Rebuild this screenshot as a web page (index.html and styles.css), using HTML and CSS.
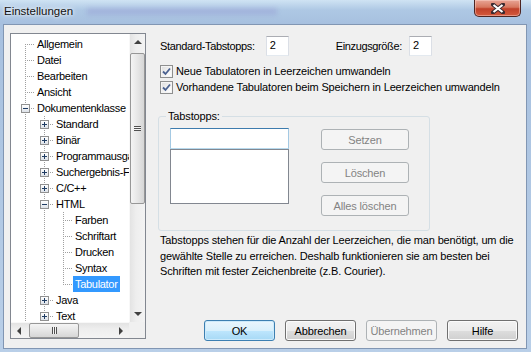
FILE: index.html
```html
<!doctype html>
<html>
<head>
<meta charset="utf-8">
<title>Einstellungen</title>
<link rel="stylesheet" href="styles.css">
</head>
<body>
<div class="window">
  <div class="titlebar">
    <span class="title">Einstellungen</span>
    <span class="ghost"></span>
    <span class="close">
      <svg width="14" height="11" viewBox="0 0 14 11">
        <path d="M2 1.5 L12 9.5 M12 1.5 L2 9.5" stroke="#3a2a30" stroke-width="4" stroke-linecap="square"/>
        <path d="M2.5 2 L11.5 9 M11.5 2 L2.5 9" stroke="#fff" stroke-width="2.2"/>
      </svg>
    </span>
  </div>

  <div class="client">
    <div class="tree">
      <div class="items">
        <div class="row"><span class="c first"></span><span class="label">Allgemein</span></div>
        <div class="row"><span class="c tee"></span><span class="label">Datei</span></div>
        <div class="row"><span class="c tee"></span><span class="label">Bearbeiten</span></div>
        <div class="row"><span class="c tee"></span><span class="label">Ansicht</span></div>
        <div class="row"><span class="c tee"><span class="box"></span></span><span class="label">Dokumentenklasse</span></div>
        <div class="row"><span class="c pipe"></span><span class="c tee"><span class="box plus"></span></span><span class="label">Standard</span></div>
        <div class="row"><span class="c pipe"></span><span class="c tee"><span class="box plus"></span></span><span class="label">Binär</span></div>
        <div class="row"><span class="c pipe"></span><span class="c tee"><span class="box plus"></span></span><span class="label">Programmausgabe</span></div>
        <div class="row"><span class="c pipe"></span><span class="c tee"><span class="box plus"></span></span><span class="label">Suchergebnis-Fenster</span></div>
        <div class="row"><span class="c pipe"></span><span class="c tee"><span class="box plus"></span></span><span class="label">C/C++</span></div>
        <div class="row"><span class="c pipe"></span><span class="c tee"><span class="box"></span></span><span class="label">HTML</span></div>
        <div class="row"><span class="c pipe"></span><span class="c pipe"></span><span class="c tee"></span><span class="label">Farben</span></div>
        <div class="row"><span class="c pipe"></span><span class="c pipe"></span><span class="c tee"></span><span class="label">Schriftart</span></div>
        <div class="row"><span class="c pipe"></span><span class="c pipe"></span><span class="c tee"></span><span class="label">Drucken</span></div>
        <div class="row"><span class="c pipe"></span><span class="c pipe"></span><span class="c tee"></span><span class="label">Syntax</span></div>
        <div class="row"><span class="c pipe"></span><span class="c pipe"></span><span class="c last"></span><span class="label sel">Tabulator</span></div>
        <div class="row"><span class="c pipe"></span><span class="c tee"><span class="box plus"></span></span><span class="label">Java</span></div>
        <div class="row"><span class="c pipe"></span><span class="c tee"><span class="box plus"></span></span><span class="label">Text</span></div>
        <div class="row"><span class="c pipe"></span><span class="c pipe"></span></div>
      </div>
      <div class="vscroll">
        <span class="arrow up"></span>
        <span class="vthumb"><span class="grip-h"></span></span>
        <span class="arrow down"></span>
      </div>
      <div class="hscroll">
        <span class="arrow left"></span>
        <span class="hthumb"><span class="grip-v"></span></span>
        <span class="arrow right"></span>
      </div>
      <div class="corner"></div>
    </div>

    <div class="panel">
      <div class="fields">
        <label class="lbl">Standard-Tabstopps:</label>
        <span class="num">2</span>
        <label class="lbl indent-lbl">Einzugsgröße:</label>
        <span class="num">2</span>
      </div>

      <div class="checks">
        <div class="check-row">
          <span class="cb"><svg width="9" height="9" viewBox="0 0 9 9"><path d="M1 4.5 L3.5 7 L8 1.5" fill="none" stroke="#4b6291" stroke-width="1.8"/></svg></span>
          <span>Neue Tabulatoren in Leerzeichen umwandeln</span>
        </div>
        <div class="check-row">
          <span class="cb"><svg width="9" height="9" viewBox="0 0 9 9"><path d="M1 4.5 L3.5 7 L8 1.5" fill="none" stroke="#4b6291" stroke-width="1.8"/></svg></span>
          <span>Vorhandene Tabulatoren beim Speichern in Leerzeichen umwandeln</span>
        </div>
      </div>

      <fieldset class="group">
        <legend>Tabstopps:</legend>
        <div class="group-body">
          <div class="lists">
            <span class="edit"></span>
            <span class="listbox"></span>
          </div>
          <div class="side-buttons">
            <span class="btn disabled">Setzen</span>
            <span class="btn disabled">Löschen</span>
            <span class="btn disabled">Alles löschen</span>
          </div>
        </div>
      </fieldset>

      <p class="hint">Tabstopps stehen für die Anzahl der Leerzeichen, die man benötigt, um die<br>gewählte Stelle zu erreichen. Deshalb funktionieren sie am besten bei<br>Schriften mit fester Zeichenbreite (z.B. Courier).</p>

      <div class="buttons">
        <span class="btn default">OK</span>
        <span class="btn">Abbrechen</span>
        <span class="btn disabled">Übernehmen</span>
        <span class="btn">Hilfe</span>
      </div>
    </div>
  </div>
</div>
</body>
</html>
```

FILE: styles.css
```css
* { box-sizing: border-box; }
body { margin: 0; font-family: "Liberation Sans", Arial, sans-serif; font-size: 11px; color: #000; }

.window {
  width: 531px;
  height: 352px;
  display: flex;
  flex-direction: column;
  overflow: hidden;
  background: linear-gradient(#cfe3f3 0, #aec8e4 10px, #a7c0df 24px, #b9cfe8 100%);
}

/* title bar */
.titlebar { height: 24px; flex: none; display: flex; align-items: flex-start; padding-left: 4px; }
.title { font-size: 11.5px; line-height: 14px; margin-top: 4px; color: #111; text-shadow: 0 0 6px #fff, 0 0 3px #fff; }
.ghost {
  width: 190px; height: 7px; margin: 8px 0 0 14px;
  background: rgba(120, 100, 190, .2);
  filter: blur(2.5px);
}
.close {
  margin-left: auto;
  margin-right: 10px;
  width: 47px;
  height: 17px;
  border: 1px solid #4d2522;
  border-top: 0;
  border-radius: 0 0 5px 5px;
  background: linear-gradient(#e8a596, #d7775f 45%, #c0412a 55%, #d45a3d);
  box-shadow: inset 0 0 0 1px rgba(255, 220, 210, .45);
  display: flex;
  align-items: center;
  justify-content: center;
}

/* client area */
.client {
  flex: 1;
  margin: 0 4px 3px 3px;
  border: 1px solid #8196b3;
  background: #f0f0f0;
  display: grid;
  grid-template-columns: 136px 1fr;
  column-gap: 14px;
  padding: 8px 8px 7px 6px;
}

/* tree view */
.tree {
  height: 306px;
  border: 1px solid #828790;
  background: #fff;
  display: grid;
  grid-template-columns: 1fr 16px;
  grid-template-rows: 1fr 16px;
  overflow: hidden;
}
.items { overflow: hidden; padding: 2px 0 0 5px; }
.row { display: flex; height: 16px; white-space: nowrap; }
.c { flex: none; width: 19px; height: 16px; }
.pipe {
  background: repeating-linear-gradient(#a0a0a0 0 1px, transparent 1px 2px) 9px 0 / 1px 16px no-repeat;
}
.tee {
  background:
    repeating-linear-gradient(#a0a0a0 0 1px, transparent 1px 2px) 9px 0 / 1px 16px no-repeat,
    repeating-linear-gradient(90deg, #a0a0a0 0 1px, transparent 1px 2px) 9px 8px / 10px 1px no-repeat;
}
.first {
  background:
    repeating-linear-gradient(#a0a0a0 0 1px, transparent 1px 2px) 9px 8px / 1px 8px no-repeat,
    repeating-linear-gradient(90deg, #a0a0a0 0 1px, transparent 1px 2px) 9px 8px / 10px 1px no-repeat;
}
.last {
  background:
    repeating-linear-gradient(#a0a0a0 0 1px, transparent 1px 2px) 9px 0 / 1px 9px no-repeat,
    repeating-linear-gradient(90deg, #a0a0a0 0 1px, transparent 1px 2px) 9px 8px / 10px 1px no-repeat;
}
.box {
  display: block;
  width: 9px;
  height: 9px;
  margin: 4px 0 0 5px;
  border: 1px solid #919191;
  background:
    linear-gradient(#1f3c63, #1f3c63) center / 5px 1px no-repeat,
    linear-gradient(#fff, #dde2e9);
}
.box.plus {
  background:
    linear-gradient(#1f3c63, #1f3c63) center / 5px 1px no-repeat,
    linear-gradient(#1f3c63, #1f3c63) center / 1px 5px no-repeat,
    linear-gradient(#fff, #dde2e9);
}
.label { padding: 0 2px; line-height: 16px; letter-spacing: -0.3px; }
.sel { background: #3399ff; color: #fff; }

/* scrollbars */
.vscroll {
  display: flex;
  flex-direction: column;
  align-items: center;
  background: linear-gradient(90deg, #e3e3e3, #eeeeee 40%, #f3f3f3);
  border-left: 1px solid #f8f8f8;
}
.hscroll {
  display: flex;
  align-items: center;
  background: linear-gradient(#e3e3e3, #eeeeee 40%, #f3f3f3);
  border-top: 1px solid #f8f8f8;
}
.corner { background: #f0f0f0; }
.arrow { flex: none; width: 0; height: 0; border: 4px solid transparent; }
.arrow.up { border-bottom-color: #404040; border-top-width: 0; margin-top: 6px; }
.arrow.down { border-top-color: #404040; border-bottom-width: 0; margin-top: auto; margin-bottom: 6px; }
.arrow.left { border-right-color: #404040; border-left-width: 0; margin-left: 6px; }
.arrow.right { border-left-color: #404040; border-right-width: 0; margin-left: auto; margin-right: 6px; }
.vthumb {
  width: 15px;
  height: 151px;
  margin-top: 9px;
  border: 1px solid #979797;
  border-radius: 2px;
  background: linear-gradient(90deg, #f4f4f4, #e6e6e6 50%, #d6d6d6);
  display: flex;
  align-items: center;
  justify-content: center;
}
.grip-h {
  width: 7px; height: 5px;
  background: repeating-linear-gradient(#505050 0 1px, #f4f4f4 1px 2px);
}
.hthumb {
  width: 50px;
  height: 15px;
  margin-left: 8px;
  border: 1px solid #979797;
  border-radius: 2px;
  background: linear-gradient(#f4f4f4, #e6e6e6 50%, #d6d6d6);
  display: flex;
  align-items: center;
  justify-content: center;
}
.grip-v {
  width: 5px; height: 7px;
  background: repeating-linear-gradient(90deg, #505050 0 1px, #f4f4f4 1px 2px);
}

/* right panel */
.panel { display: flex; flex-direction: column; letter-spacing: -0.15px; }
.fields { display: flex; align-items: center; margin-top: 3px; height: 20px; letter-spacing: -0.36px; }
.lbl { margin-right: 11px; }
.indent-lbl { margin-left: 47px; margin-right: 7px; }
.num {
  width: 23px;
  height: 20px;
  padding: 2px 0 0 3px;
  background: #fff;
  border: 1px solid #dbdfe6;
  border-top-color: #abadb3;
  border-bottom-color: #e3e9ef;
}
.checks { margin-top: 7px; }
.check-row { display: flex; align-items: center; height: 16px; }
.cb {
  width: 13px;
  height: 13px;
  margin-right: 3px;
  border: 1px solid #8e8f8f;
  background: linear-gradient(135deg, #dcdcdc, #f8f8f8 70%, #fff);
  box-shadow: inset 0 0 0 1px #f4f4f4;
  display: flex;
  align-items: center;
  justify-content: center;
}

.group {
  margin: 14px 0 0 -2px;
  width: 272px;
  padding: 5px 19px 14px 11px;
  border: 1px solid #d5dfe5;
  border-radius: 3px;
  min-width: 0;
}
.group legend { padding: 0 2px; margin-left: -4px; line-height: 14px; }
.group-body { display: flex; gap: 32px; }
.lists { display: flex; flex-direction: column; width: 119px; }
.edit {
  height: 21px;
  background: #fff;
  border: 1px solid #a4c9e3;
  border-top-color: #3d7bad;
  border-bottom-color: #b7d9ed;
}
.listbox { height: 55px; background: #fff; border: 1px solid #828790; }
.side-buttons { display: flex; flex-direction: column; gap: 12px; margin-top: 1px; }
.side-buttons .btn { width: 88px; }

.hint { margin: 2px 0 0; line-height: 15.5px; white-space: nowrap; }

.buttons { margin-top: auto; display: flex; justify-content: flex-end; gap: 10px; }

.btn {
  display: flex;
  align-items: center;
  justify-content: center;
  width: 71px;
  height: 21px;
  border: 1px solid #707070;
  border-radius: 3px;
  background: linear-gradient(#f2f2f2, #ebebeb 50%, #dddddd 51%, #cfcfcf);
  box-shadow: inset 0 0 0 1px #fbfbfb;
}
.btn.default {
  border-color: #3c7fb1;
  background: linear-gradient(#eaf6fd, #d9f0fc 50%, #bee6fd 51%, #a7d9f5);
  box-shadow: inset 0 0 0 1px #cdeafb;
}
.btn.disabled {
  color: #838383;
  border-color: #adb2b5;
  background: #f4f4f4;
  box-shadow: none;
}
```
